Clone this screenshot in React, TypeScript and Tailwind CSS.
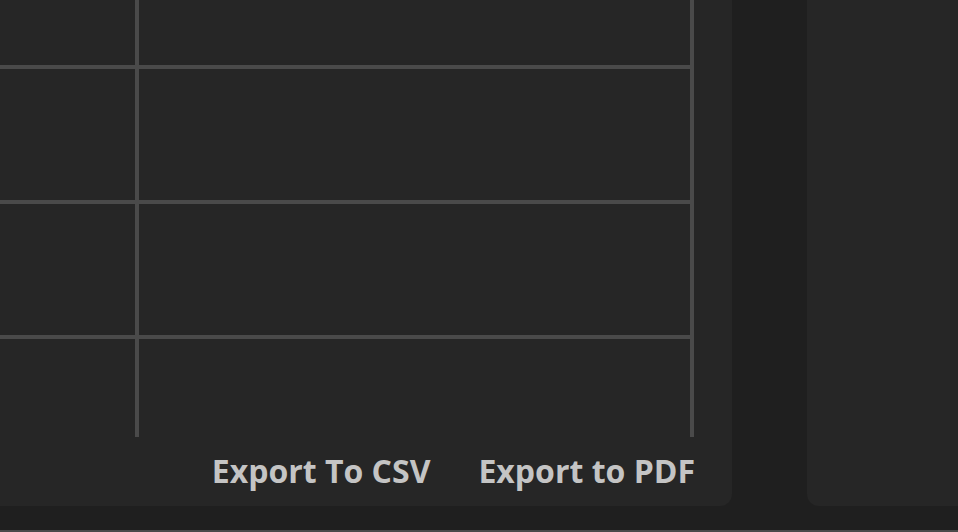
const rows = [65, 131, 131, 98]

export default function App() {
  return (
    <div className="flex flex-col h-[532px] w-[958px] overflow-hidden bg-[#1f1f1f] border-b-2 border-[#4a4a4a]" style={{ fontFamily: '"Open Sans", Lato, sans-serif' }}>
      <div className="flex flex-1 min-h-0">
        {/* Main panel with table */}
        <div className="flex flex-col w-[732px] h-[506px] bg-[#262626] rounded-br-xl">
          <div className="flex flex-col pr-[38px]">
            {rows.map((h, i) => (
              <div
                key={i}
                className={i < rows.length - 1 ? 'flex border-b-4 border-[#4a4a4a]' : 'flex'}
              >
                <div className="w-[139px] border-r-4 border-[#4a4a4a]" style={{ height: h }} />
                <div className="flex-1 border-r-4 border-[#4a4a4a]" style={{ height: h }} />
              </div>
            ))}
          </div>
          <div className="flex flex-1 items-center justify-end gap-[48px] pr-[37px] pb-[2px] text-[32px] font-bold text-[#c4c4c4] leading-none">
            <button className="cursor-pointer">Export To CSV</button>
            <button className="cursor-pointer">Export to PDF</button>
          </div>
        </div>

        <div className="w-[75px]" />

        {/* Side panel */}
        <div className="flex-1 h-[506px] bg-[#262626] rounded-bl-xl" />
      </div>
    </div>
  )
}
